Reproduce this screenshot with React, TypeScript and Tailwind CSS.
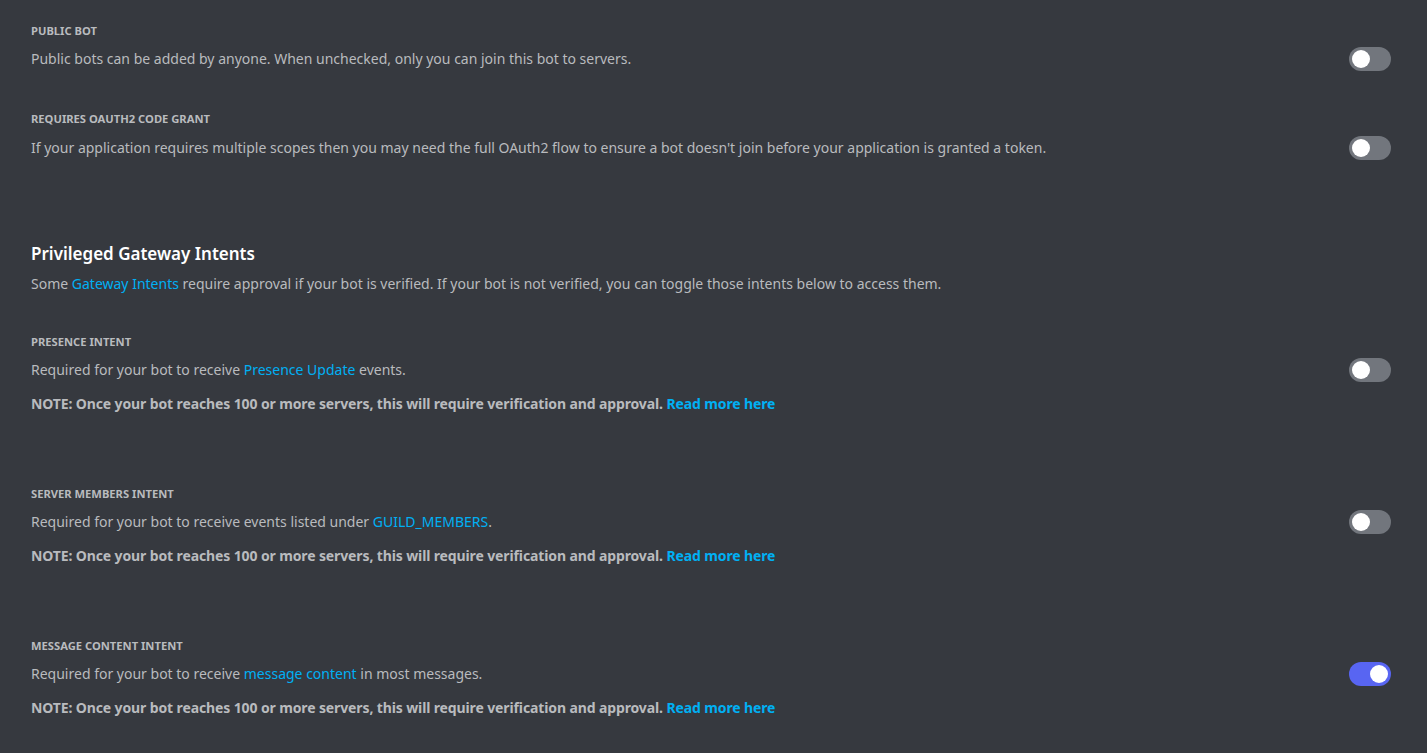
import React, { useState } from 'react';

const Toggle = ({ on, onClick }: { on: boolean; onClick: () => void }) => (
  <button
    onClick={onClick}
    className={`-my-0.5 flex h-6 w-[42px] shrink-0 items-center rounded-full px-[3px] ${
      on ? 'justify-end bg-[#5865f2]' : 'justify-start bg-[#72767d]'
    }`}
  >
    <span className="h-[18px] w-[18px] rounded-full bg-white" />
  </button>
);

const Link = ({ children, bold }: { children: React.ReactNode; bold?: boolean }) => (
  <a className={`cursor-pointer text-[#00b0f4] ${bold ? 'font-bold' : ''}`}>{children}</a>
);

const Label = ({ children }: { children: React.ReactNode }) => (
  <div className="h-4 text-[11.2px] font-bold uppercase leading-4 text-[#b9bbbe]">{children}</div>
);

const Note = () => (
  <p className="mt-[14px] h-5 text-[14px] font-bold leading-5 tracking-[-0.12px] text-[#b9bbbe]">
    NOTE: Once your bot reaches 100 or more servers, this will require verification and approval.{' '}
    <Link bold>Read more here</Link>
  </p>
);

export default function App() {
  const [toggles, setToggles] = useState({
    publicBot: false,
    codeGrant: false,
    presence: false,
    members: false,
    content: true,
  });
  const flip = (k: keyof typeof toggles) => setToggles({ ...toggles, [k]: !toggles[k] });

  return (
    <div
      className="min-h-screen w-full bg-[#36393f] pl-[31px] pr-[36px] pt-[23px]"
      style={{ fontFamily: '"Noto Sans", "Open Sans", sans-serif' }}
    >
      {/* Public bot */}
      <Label>Public Bot</Label>
      <div className="mt-[10px] flex h-5 items-center justify-between text-[14px] leading-5 text-[#b9bbbe]">
        <span>Public bots can be added by anyone. When unchecked, only you can join this bot to servers.</span>
        <Toggle on={toggles.publicBot} onClick={() => flip('publicBot')} />
      </div>

      {/* OAuth2 grant */}
      <div className="mt-[42px]">
        <Label>Requires OAuth2 Code Grant</Label>
        <div className="mt-[11px] flex h-5 items-center justify-between text-[14px] leading-5 text-[#b9bbbe]">
          <span>
            If your application requires multiple scopes then you may need the full OAuth2 flow to ensure a bot doesn't join before your application is granted a token.
          </span>
          <Toggle on={toggles.codeGrant} onClick={() => flip('codeGrant')} />
        </div>
      </div>

      {/* Privileged intents */}
      <h2 className="mt-[84px] h-6 text-[17px] font-semibold leading-6 text-white">Privileged Gateway Intents</h2>
      <p className="mt-2 h-5 text-[14px] leading-5 text-[#b9bbbe]">
        Some <Link>Gateway Intents</Link> require approval if your bot is verified. If your bot is not verified, you can toggle those intents below to access them.
      </p>

      <div className="mt-[40px]">
        <Label>Presence Intent</Label>
        <div className="mt-[10px] flex h-5 items-center justify-between text-[14px] leading-5 text-[#b9bbbe]">
          <span>
            Required for your bot to receive <Link>Presence Update</Link> events.
          </span>
          <Toggle on={toggles.presence} onClick={() => flip('presence')} />
        </div>
        <Note />
      </div>

      <div className="mt-[72px]">
        <Label>Server Members Intent</Label>
        <div className="mt-[10px] flex h-5 items-center justify-between text-[14px] leading-5 text-[#b9bbbe]">
          <span>
            Required for your bot to receive events listed under <Link>GUILD_MEMBERS</Link>.
          </span>
          <Toggle on={toggles.members} onClick={() => flip('members')} />
        </div>
        <Note />
      </div>

      <div className="mt-[72px] pb-10">
        <Label>Message Content Intent</Label>
        <div className="mt-[10px] flex h-5 items-center justify-between text-[14px] leading-5 text-[#b9bbbe]">
          <span>
            Required for your bot to receive <Link>message content</Link> in most messages.
          </span>
          <Toggle on={toggles.content} onClick={() => flip('content')} />
        </div>
        <Note />
      </div>
    </div>
  );
}
